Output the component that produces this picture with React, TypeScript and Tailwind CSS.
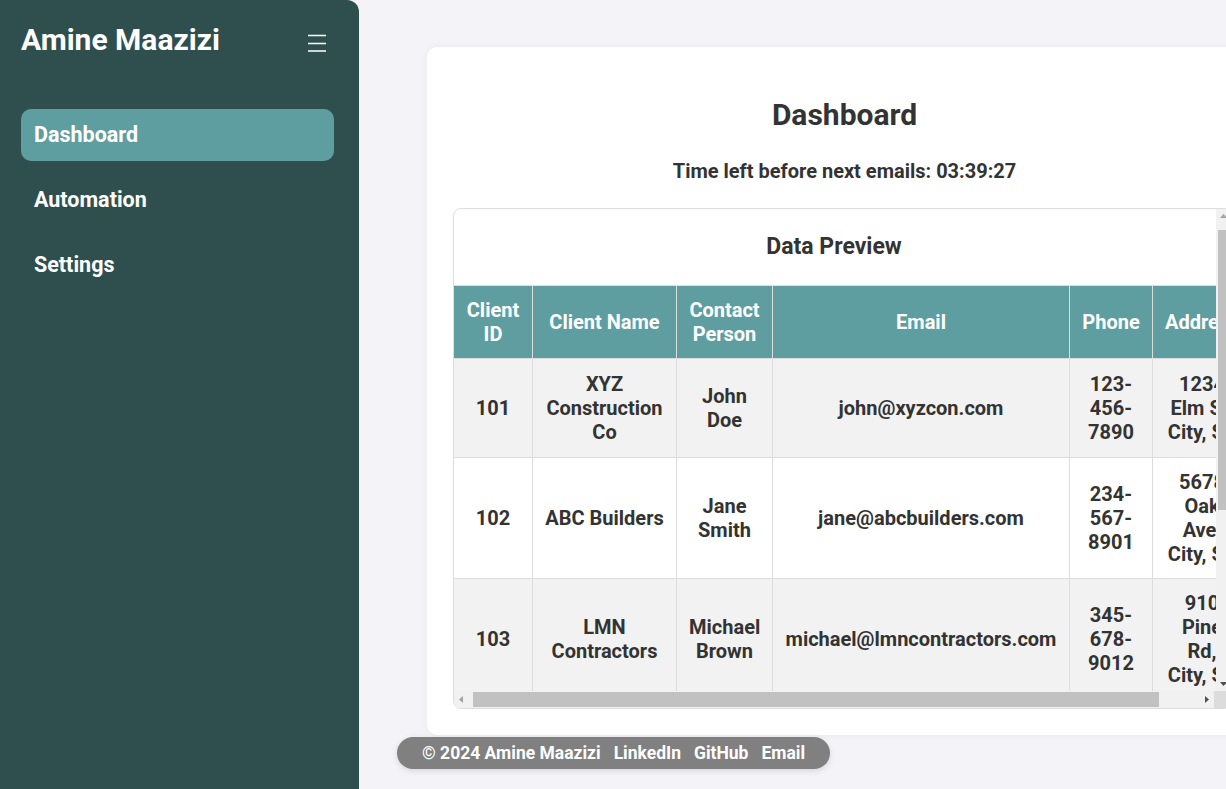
import React from 'react';

interface ClientRow {
    id: number;
    name: string;
    contact: string;
    email: string;
    phone: string;
    address: string[];
}

const clients: ClientRow[] = [
    { id: 101, name: 'XYZ Construction Co', contact: 'John Doe', email: 'john@xyzcon.com', phone: '123-456-7890', address: ['1234', 'Elm St,', 'City, ST'] },
    { id: 102, name: 'ABC Builders', contact: 'Jane Smith', email: 'jane@abcbuilders.com', phone: '234-567-8901', address: ['5678', 'Oak', 'Ave,', 'City, ST'] },
    { id: 103, name: 'LMN Contractors', contact: 'Michael Brown', email: 'michael@lmncontractors.com', phone: '345-678-9012', address: ['910', 'Pine', 'Rd,', 'City, ST'] },
    { id: 104, name: 'PQR Developers', contact: 'Emily Davis', email: 'emily@pqrdev.com', phone: '456-789-0123', address: ['1112', 'Maple', 'Dr,', 'City, ST'] },
];

const columns = [
    { label: 'Client ID', width: 'w-[79px]' },
    { label: 'Client Name', width: 'w-[144px]' },
    { label: 'Contact Person', width: 'w-[96px]' },
    { label: 'Email', width: 'w-[297px]' },
    { label: 'Phone', width: 'w-[83px]' },
    { label: 'Address', width: 'w-[99px]' },
];

const navItems = ['Dashboard', 'Automation', 'Settings'];

const Sidebar: React.FC = () => (
    <aside className="w-[359px] shrink-0 h-full bg-[#2f4f4f] rounded-tr-[12px] px-[21px] pt-[22px]">
        <div className="flex items-center justify-between pr-[11px]">
            <h1 className="text-[30px] leading-[36px] font-bold text-white">Amine Maazizi</h1>
            <svg width="20" height="20" viewBox="0 0 20 20" className="mt-[3px]">
                <path d="M1 3.5h18M1 11.5h18M1 19h18" stroke="#fff" strokeWidth="1.5" />
            </svg>
        </div>
        <nav className="mt-[51px] w-[313px] flex flex-col gap-[13px]">
            {navItems.map((item, i) => (
                <a
                    key={item}
                    className={
                        i === 0
                            ? 'h-[52px] flex items-center px-[13px] rounded-[10px] bg-[#5f9ea0] text-white text-[21.5px] font-bold'
                            : 'h-[52px] flex items-center px-[13px] rounded-[10px] text-white text-[21.5px] font-bold'
                    }
                >
                    {item}
                </a>
            ))}
        </nav>
    </aside>
);

// classic scrollbar pieces, drawn since the headless page hides native ones
const Arrow: React.FC<{ dir: 'up' | 'down' | 'left' | 'right' }> = ({ dir }) => {
    const pts = {
        up: '4,9 7.5,5 11,9',
        down: '4,6 7.5,10 11,6',
        left: '9,4 5,7.5 9,11',
        right: '6,4 10,7.5 6,11',
    }[dir];
    return (
        <svg width="15" height="15" viewBox="0 0 15 15" className="shrink-0">
            <polygon points={pts} fill={dir === 'up' || dir === 'left' ? '#a3a3a3' : '#505050'} />
        </svg>
    );
};

const DataPreview: React.FC = () => (
    <div className="h-[501px] border border-[#ddd] rounded-[8px] bg-white overflow-hidden flex flex-col">
        <div className="flex-1 min-h-0 flex">
            <div className="flex-1 min-w-0 overflow-hidden">
                <h3 className="h-[76px] flex items-center justify-center pr-[2px] text-[23px] font-bold text-[#333]">Data Preview</h3>
                <table className="-ml-px table-fixed border-collapse w-[798px] text-[20px] leading-[24px] font-bold text-center">
                    <colgroup>
                        {columns.map(c => (
                            <col key={c.label} className={c.width} />
                        ))}
                    </colgroup>
                    <thead>
                        <tr className="bg-[#5f9ea0] text-white">
                            {columns.map(c => (
                                <th key={c.label} className="border border-[#ddd] px-[12px] py-[12px] font-bold">
                                    {c.label}
                                </th>
                            ))}
                        </tr>
                    </thead>
                    <tbody className="text-[#333]">
                        {clients.map((row, i) => {
                            const cell = i === 0
                                ? 'border border-[#ddd] px-[12px] py-[13px]'
                                : 'border border-[#ddd] px-[12px] py-[12px]';
                            return (
                                <tr key={row.id} className={i % 2 === 0 ? 'bg-[#f2f2f2]' : 'bg-white'}>
                                    <td className={cell}>{row.id}</td>
                                    <td className={cell}>{row.name}</td>
                                    <td className={cell}>{row.contact}</td>
                                    <td className={cell}>{row.email}</td>
                                    <td className={cell}>{row.phone}</td>
                                    <td className={cell}>
                                        {row.address.map(line => (
                                            <div key={line} className="whitespace-nowrap">{line}</div>
                                        ))}
                                    </td>
                                </tr>
                            );
                        })}
                    </tbody>
                </table>
            </div>
            <div className="w-[15px] shrink-0 bg-[#f1f1f1] flex flex-col">
                <Arrow dir="up" />
                <div className="mt-[6px] mx-[2px] h-[280px] bg-[#c1c1c1]" />
                <div className="flex-1" />
                <Arrow dir="down" />
            </div>
        </div>
        <div className="h-[17px] shrink-0 flex items-center bg-[#f1f1f1]">
            <Arrow dir="left" />
            <div className="ml-[4px] w-[686px] h-[15px] bg-[#c1c1c1]" />
            <div className="flex-1" />
            <Arrow dir="right" />
            <div className="w-[17px] h-full bg-[#dcdcdc]" />
        </div>
    </div>
);

export default function App() {
    return (
        <div className="flex h-screen overflow-hidden bg-[#f4f4f8] font-['Roboto',sans-serif] text-[#333]">
            <Sidebar />
            <main className="flex-1 min-w-0 overflow-hidden pt-[47px]">
                <div className="ml-[68px] w-[831px] bg-white rounded-[10px] shadow-[0_0_6px_rgba(0,0,0,0.06)] px-[26px] pt-[50px] pb-[26px]">
                    <h2 className="pl-[4px] text-center text-[30px] leading-[36px] font-bold">Dashboard</h2>
                    <p className="pl-[4px] mt-[26px] text-center text-[20px] leading-[24px] font-bold">
                        Time left before next emails: 03:39:27
                    </p>
                    <div className="mt-[25px]">
                        <DataPreview />
                    </div>
                </div>
                <footer className="ml-[38px] mt-[2px] inline-flex items-center gap-[13px] h-[32px] px-[25px] rounded-full bg-[#808080] text-white text-[17.5px] font-bold shadow-[0_2px_6px_rgba(0,0,0,0.12)]">
                    <span>© 2024 Amine Maazizi</span>
                    <a>LinkedIn</a>
                    <a>GitHub</a>
                    <a>Email</a>
                </footer>
            </main>
        </div>
    );
}
